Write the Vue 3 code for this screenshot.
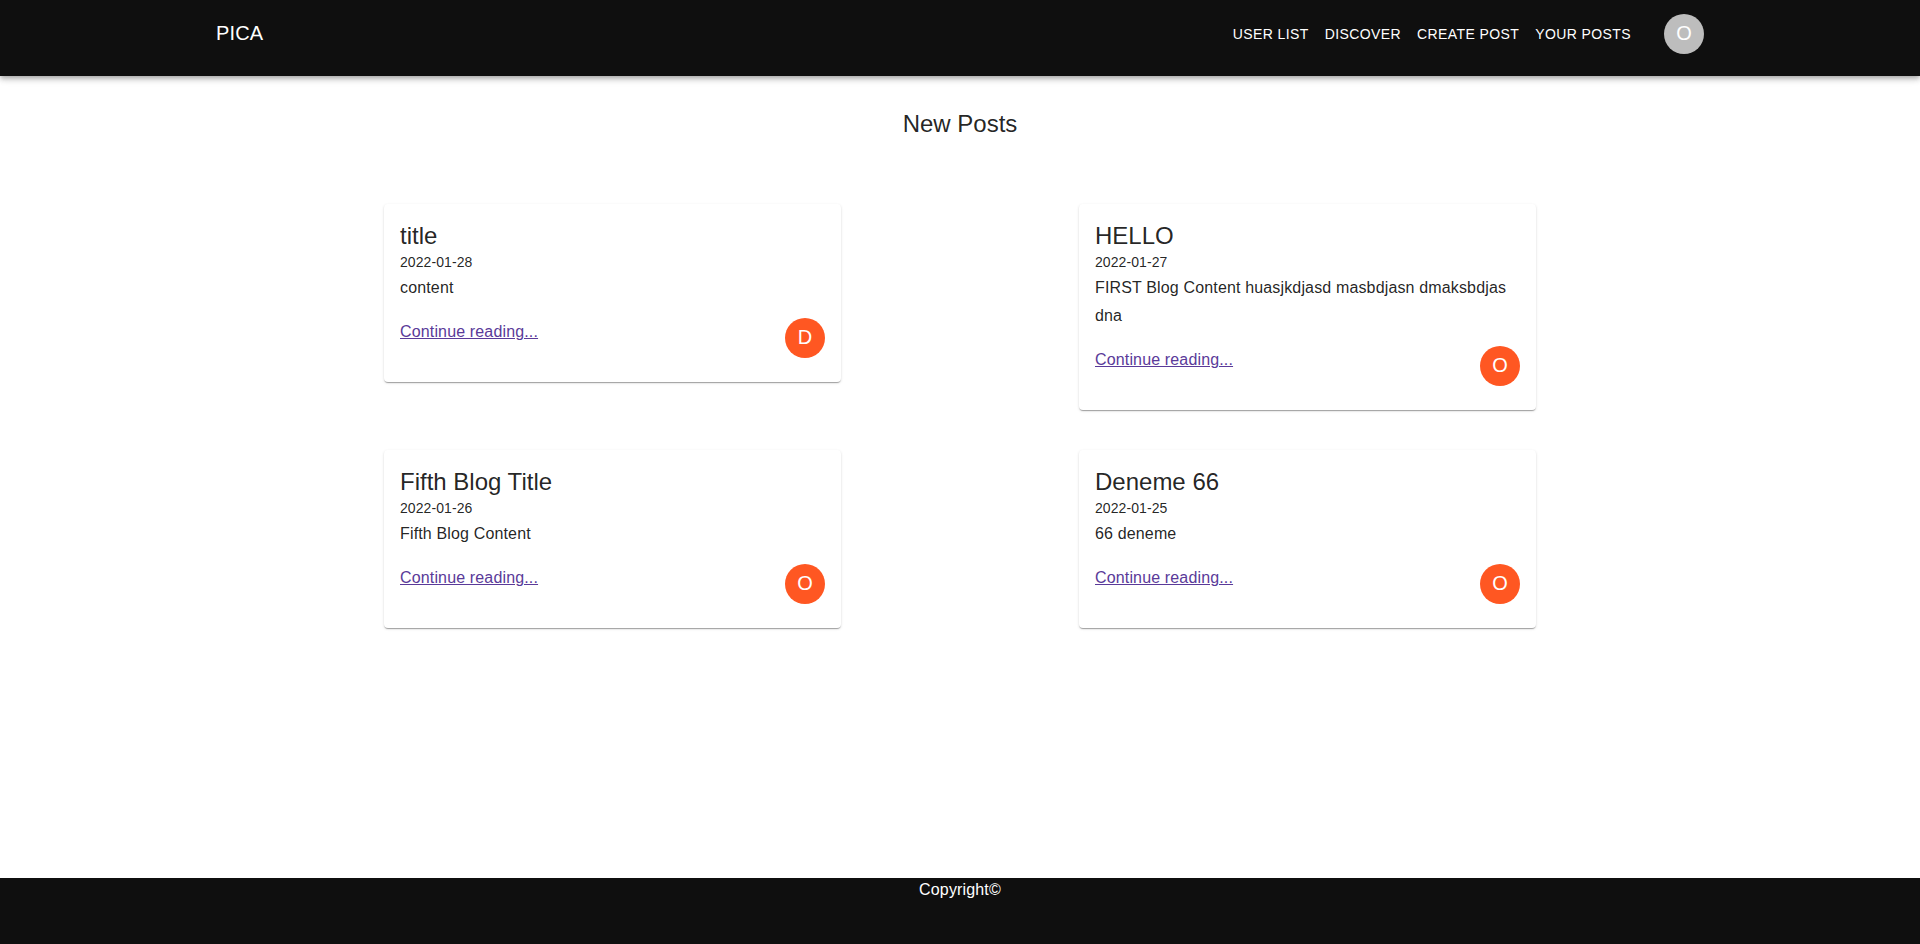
<script setup>
const links = ['User List', 'Discover', 'Create Post', 'Your Posts']
const posts = [
  { title: 'title', date: '2022-01-28', content: 'content', author: 'D' },
  {
    title: 'HELLO',
    date: '2022-01-27',
    content: 'FIRST Blog Content huasjkdjasd masbdjasn dmaksbdjas dna',
    author: 'O',
  },
  { title: 'Fifth Blog Title', date: '2022-01-26', content: 'Fifth Blog Content', author: 'O' },
  { title: 'Deneme 66', date: '2022-01-25', content: '66 deneme', author: 'O' },
]
</script>

<template>
  <div class="page">
    <header class="bar">
      <div class="brand">PICA</div>
      <nav class="nav">
        <a v-for="link in links" :key="link" class="nav-link">{{ link }}</a>
      </nav>
      <div class="avatar avatar-user">O</div>
    </header>

    <main class="main">
      <h1 class="heading">New Posts</h1>
      <section class="grid">
        <article v-for="post in posts" :key="post.title" class="card">
          <h2 class="card-title">{{ post.title }}</h2>
          <p class="card-date">{{ post.date }}</p>
          <p class="card-content">{{ post.content }}</p>
          <div class="card-foot">
            <a class="more" href="#">Continue reading...</a>
            <div class="avatar">{{ post.author }}</div>
          </div>
        </article>
      </section>
    </main>

    <footer class="footer">Copyright©</footer>
  </div>
</template>

<style>
body {
  background: #fff;
}
</style>

<style scoped>
.page {
  display: flex;
  flex-direction: column;
  height: 944px;
  font-family: Helvetica, 'Liberation Sans', Arial, sans-serif;
  color: rgba(0, 0, 0, 0.87);
}
.bar {
  display: flex;
  align-items: flex-start;
  box-sizing: border-box;
  height: 76px;
  padding: 14px 216px 0;
  background: #0f0f0f;
  color: #fff;
  box-shadow: 0 2px 4px -1px rgba(0, 0, 0, 0.2), 0 4px 5px rgba(0, 0, 0, 0.14),
    0 1px 10px rgba(0, 0, 0, 0.12);
}
.brand {
  flex: 1;
  padding-top: 3px;
  font-size: 20px;
  line-height: 32px;
  letter-spacing: 0.15px;
}
.nav {
  display: flex;
  gap: 16px;
  margin-right: 33px;
  padding-top: 8px;
}
.nav-link {
  font-size: 14px;
  line-height: 24px;
  letter-spacing: 0.4px;
  text-transform: uppercase;
}
.avatar {
  display: flex;
  align-items: center;
  justify-content: center;
  box-sizing: border-box;
  width: 40px;
  height: 40px;
  padding-bottom: 2px;
  border-radius: 50%;
  background: #ff5722;
  color: #fff;
  font-size: 20px;
  line-height: 20px;
}
.avatar-user {
  background: #bdbdbd;
}
.main {
  flex: 1;
}
.heading {
  margin: 32px 0 0;
  font-size: 24px;
  font-weight: 400;
  line-height: 32px;
  text-align: center;
}
.grid {
  display: grid;
  grid-template-columns: 457px 457px;
  justify-content: space-between;
  align-items: start;
  row-gap: 40px;
  width: 1152px;
  margin: 64px auto 0;
}
.card {
  box-sizing: border-box;
  padding: 16px 16px 24px;
  border-radius: 4px;
  background: #fff;
  box-shadow: 0 2px 1px -1px rgba(0, 0, 0, 0.2), 0 1px 1px rgba(0, 0, 0, 0.14),
    0 1px 3px rgba(0, 0, 0, 0.12);
}
.card-title,
.card-date,
.card-content {
  margin: 0;
  font-weight: 400;
}
.card-title {
  font-size: 24px;
  line-height: 32px;
}
.card-date {
  font-size: 14px;
  line-height: 20px;
  letter-spacing: 0.08px;
}
.card-content {
  margin-top: 2px;
  font-size: 16px;
  line-height: 28px;
  letter-spacing: 0.15px;
}
.card-foot {
  display: flex;
  justify-content: space-between;
  align-items: flex-start;
  margin-top: 16px;
}
.more {
  font-size: 16px;
  line-height: 28px;
  letter-spacing: 0.15px;
  color: #5a3a99;
}
.footer {
  height: 66px;
  background: #0f0f0f;
  color: #fff;
  font-size: 16px;
  line-height: 24px;
  letter-spacing: 0.15px;
  text-align: center;
}
</style>
